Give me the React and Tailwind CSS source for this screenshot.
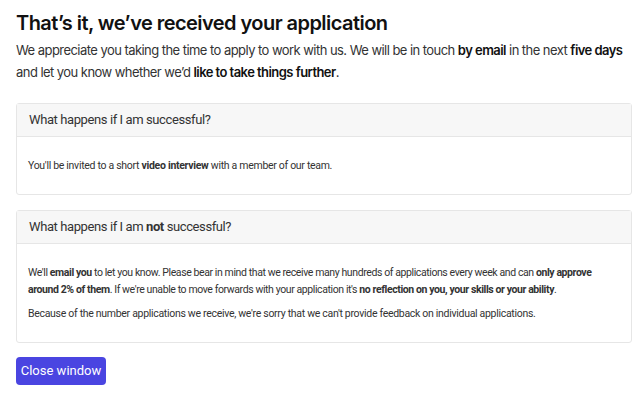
import React from 'react';

const sans = "font-['Inter','Liberation_Sans',sans-serif]";
const ui = "font-['Roboto','Open_Sans',sans-serif]";

function InfoCard({ title, children }) {
  return (
    <div className="rounded-[3px] border border-[#e6e6e6] bg-white">
      <div className={`border-b border-[#e6e6e6] bg-[#f7f7f7] px-3 py-[7px] text-[13px] leading-[18px] tracking-[-0.4px] text-[#333] ${ui}`}>
        {title}
      </div>
      <div className={`px-[11px] py-5 text-[10.5px] leading-[17px] tracking-[-0.3px] text-[#333] ${ui}`}>{children}</div>
    </div>
  );
}

export default function App() {
  return (
    <div className="min-h-[402px] w-[640px] bg-white pl-4 pr-2 pt-[9px]">
      <h1 className={`text-[20px] font-semibold leading-[28px] tracking-[-0.55px] text-[#111] ${sans}`}>
        That’s it, we’ve received your application
      </h1>
      <p className={`mt-[2px] whitespace-nowrap text-[13px] leading-[22px] tracking-[-0.55px] text-[#333] ${sans}`}>
        We appreciate you taking the time to apply to work with us. We will be in touch{' '}
        <span className="font-semibold text-[#111]">by email</span> in the next{' '}
        <span className="font-semibold text-[#111]">five days</span>
        <br />
        and let you know whether we’d <span className="font-semibold text-[#111]">like to take things further</span>.
      </p>

      <div className="mt-[20px] flex flex-col gap-[15px]">
        <InfoCard title="What happens if I am successful?">
          You'll be invited to a short <b>video interview</b> with a member of our team.
        </InfoCard>
        <InfoCard
          title={
            <>
              What happens if I am <b>not</b> successful?
            </>
          }
        >
          <p className="whitespace-nowrap tracking-[-0.4px]">
            We'll <b>email you</b> to let you know. Please bear in mind that we receive many hundreds of applications
            every week and can <b>only approve</b>
            <br />
            <b>around 2% of them</b>. If we're unable to move forwards with your application it's{' '}
            <b>no reflection on you, your skills or your ability</b>.
          </p>
          <p className="mt-[7px]">
            Because of the number applications we receive, we're sorry that we can't provide feedback on individual
            applications.
          </p>
        </InfoCard>
      </div>

      <button
        type="button"
        className={`mt-[14px] w-[90px] rounded-[4px] bg-[#4a45e1] py-[5px] text-center text-[13px] leading-[18px] text-white ${ui}`}
      >
        Close window
      </button>
    </div>
  );
}
